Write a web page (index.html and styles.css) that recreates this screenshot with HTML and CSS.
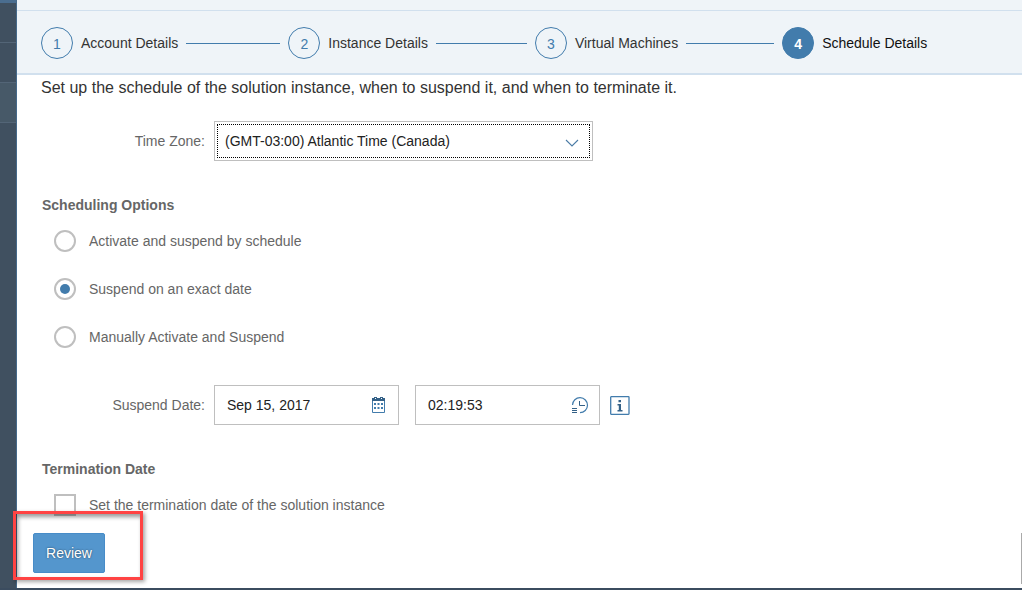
FILE: index.html
```html
<!DOCTYPE html>
<html lang="en">
<head>
<meta charset="utf-8">
<title>Schedule Details</title>
<link rel="stylesheet" href="styles.css">
</head>
<body>
<div class="app">
  <aside class="rail"><div class="rail-top"></div><div class="rail-item"></div><div class="rail-item"></div><div class="rail-item active"></div></aside>
  <main class="page">
    <header class="wizard">
      <div class="strip"></div>
      <nav class="steps">
        <div class="step"><span class="num">1</span><span class="label">Account Details</span></div>
        <i class="line line-a"></i>
        <div class="step"><span class="num">2</span><span class="label">Instance Details</span></div>
        <i class="line line-b"></i>
        <div class="step"><span class="num">3</span><span class="label">Virtual Machines</span></div>
        <i class="line line-c"></i>
        <div class="step current"><span class="num">4</span><span class="label">Schedule Details</span></div>
      </nav>
    </header>
    <section class="content">
      <p class="intro">Set up the schedule of the solution instance, when to suspend it, and when to terminate it.</p>
      <div class="field">
        <span class="field-label">Time Zone:</span>
        <div class="select"><div class="focus"><span>(GMT-03:00) Atlantic Time (Canada)</span>
          <svg class="chevron" width="14" height="8" viewBox="0 0 14 8"><path d="M1 1l6 6 6-6" fill="none" stroke="#4a7ba5" stroke-width="1.1"/></svg></div></div>
      </div>
      <h2 class="group-title">Scheduling Options</h2>
      <div class="option"><span class="radio"></span><span>Activate and suspend by schedule</span></div>
      <div class="option"><span class="radio checked"></span><span>Suspend on an exact date</span></div>
      <div class="option"><span class="radio"></span><span>Manually Activate and Suspend</span></div>
      <div class="field date-field">
        <span class="field-label">Suspend Date:</span>
        <div class="input"><span>Sep 15, 2017</span>
          <svg width="15" height="17" viewBox="0 0 15 17"><path d="M1.500 2v13.500h12V2" fill="none" stroke="#427cac"/><path d="M1 1h13v3H1z" fill="#346187"/><path d="M3 0h3v2H3zM9 0h3v2H9z" fill="#346187"/><path d="M4 1h1v1H4zM10 1h1v1h-1z" fill="#fff"/><path d="M3 6h2v2H3zM6.500 6h2v2h-2zM10 6h2v2h-2zM3 10h2v2H3zM6.500 10h2v2h-2zM10 10h2v2h-2z" fill="#427cac"/></svg>
        </div>
        <div class="input time"><span>02:19:53</span>
          <svg width="18" height="17" viewBox="0 0 18 17"><path d="M1.500 8A7.500 7.500 0 1 1 9 15.700" fill="none" stroke="#427cac" stroke-width="1.200"/><path d="M8.500 4v4.500H14M1 11.500h5M1 13.500h5M1 15.500h5" fill="none" stroke="#346187"/></svg>
        </div>
        <svg class="info" width="20" height="19" viewBox="0 0 20 19"><rect x=".7" y=".7" width="18.300" height="17.600" rx=".5" fill="none" stroke="#427cac" stroke-width="1.300"/><path d="M8.500 4h2.500v2.200H8.500zM7.500 8H11v6h1.500v1.500h-5V14h1.300V9.500H7.500z" fill="#346187"/></svg>
      </div>
      <h2 class="group-title">Termination Date</h2>
      <div class="option check-row"><span class="checkbox"></span><span>Set the termination date of the solution instance</span></div>
    </section>
    <footer class="footer"><button class="review">Review</button><i class="edge"></i></footer>
  </main>
  <div class="callout"></div>
</div>
</body>
</html>
```
FILE: styles.css
```css
* { box-sizing: border-box; }
body { margin: 0; font-family: "Liberation Sans", Arial, sans-serif; font-size: 14px; color: #666; background: #fff; }
.app { position: relative; display: flex; width: 1022px; height: 590px; overflow: hidden; border-bottom: 2px solid #3b4c5f; }
.rail { width: 17px; flex: none; background: #405060; border-right: 1px solid #466a8b; }
.rail-top { height: 3px; background: #4a6d8f; }
.rail-item { height: 40px; border-bottom: 1px solid #536577; }
.rail-item.active { background: #475968; }
.page { flex: 1; display: flex; flex-direction: column; }
.wizard { height: 75px; flex: none; background: #eff4f8; border-bottom: 2px solid #d1e0ee; }
.strip { height: 11px; border-bottom: 1px solid #d1e0ee; }
.steps { height: 62px; display: flex; align-items: center; padding: 2px 0 0 24px; }
.step { display: flex; align-items: center; gap: 8px; flex: none; color: #333; white-space: nowrap; }
.num { width: 32px; height: 32px; border: 1px solid #427cac; border-radius: 50%; color: #427cac; text-align: center; line-height: 32px; }
.current .num { background: #427cac; color: #fff; font-weight: bold; }
.current .label { color: #111; }
.line { height: 1px; flex: none; background: #427cac; margin: 1px 8px 0; }
.line-a { width: 94px; }
.line-b { width: 91px; }
.line-c { width: 88px; }
.content { height: 448px; flex: none; overflow: hidden; padding-left: 24px; }
.intro { margin: 0 0 21px; font-size: 16px; line-height: 25px; color: #333; }
.field { display: flex; align-items: center; height: 40px; }
.field-label { width: 164px; margin-right: 9px; text-align: right; }
.select { width: 379px; height: 40px; border: 1px solid #bfbfbf; padding: 2px; color: #222; }
.focus { height: 34px; border: 1px dotted #000; display: flex; align-items: center; justify-content: space-between; padding: 0 10px 0 7px; }
.chevron { margin-top: 3px; }
.group-title { margin: 32px 0 0 1px; height: 24px; line-height: 24px; font-size: 14px; }
.option { display: flex; align-items: center; height: 48px; gap: 13px; padding-left: 13px; }
.radio { width: 22px; height: 22px; border: 2px solid #bfbfbf; border-radius: 50%; display: grid; place-items: center; }
.radio.checked::after { content: ""; width: 10px; height: 10px; border-radius: 50%; background: #427cac; }
.date-field { margin-top: 24px; }
.input { display: flex; align-items: center; justify-content: space-between; width: 185px; height: 40px; padding: 0 12px; border: 1px solid #bfbfbf; color: #222; }
.input.time { margin-left: 16px; padding-right: 10px; }
.info { margin: 1px 0 0 10px; }
.checkbox { width: 22px; height: 22px; border: 2px solid #bfbfbf; }
.footer { flex: 1; display: flex; justify-content: space-between; align-items: flex-start; padding: 10px 0 0 16px; }
.review { width: 72px; height: 40px; padding: 0; border: 1px solid #478cc8; border-radius: 2px; background: #5496cd; color: #fff; font: 14px "Liberation Sans", Arial, sans-serif; text-shadow: 0 0 2px rgba(0,0,0,.6); }
.edge { width: 1px; height: 51px; background: #aaa; }
.callout { position: absolute; left: 13px; top: 511px; width: 130px; height: 69px; border: 3px solid #ff4343; box-shadow: 2px 2px 4px rgba(0,0,0,.35), inset 2px 3px 4px rgba(0,0,0,.4); }
```
